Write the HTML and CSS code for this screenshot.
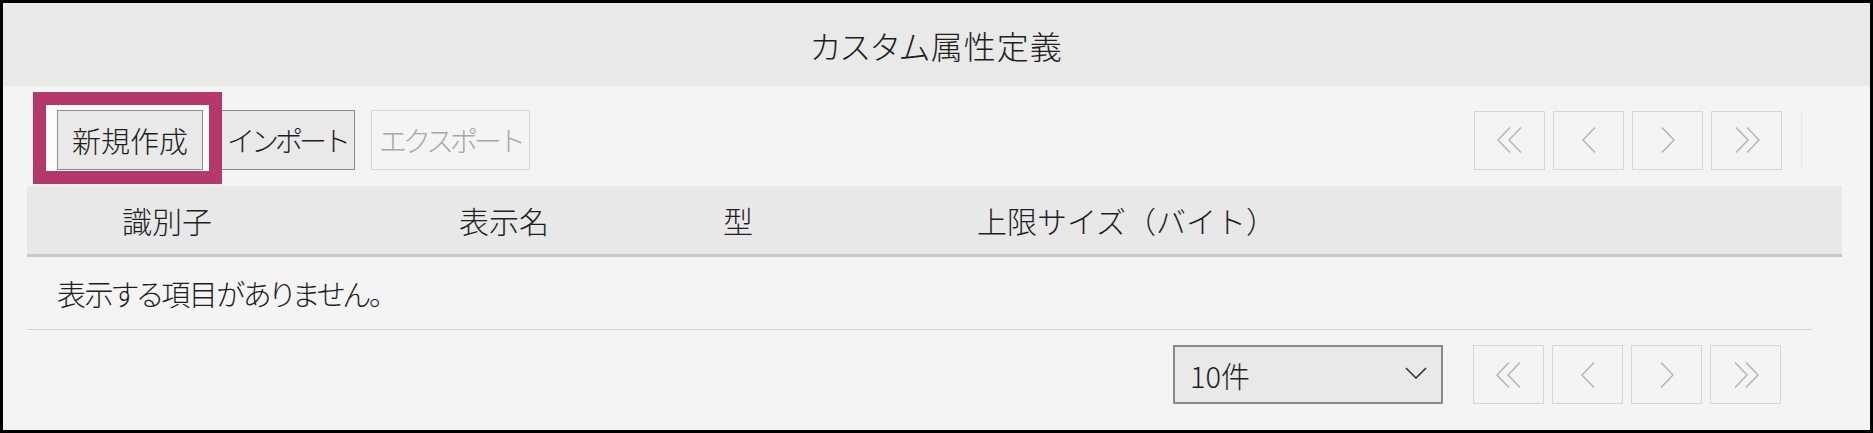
FILE: index.html
```html
<!DOCTYPE html>
<html lang="ja">
    <head>
        <meta charset="UTF-8">
        <meta name="viewport" content="width=device-width, initial-scale=1.0">
        <title>カスタム属性定義</title>
        <link rel="stylesheet" href="styles.css">
    </head>
    <body>
        <div class="frame">
            <!-- Título -->
            <header class="title-bar">カスタム属性定義</header>

            <main class="content">
                <!-- Barra de ferramentas -->
                <div class="toolbar">
                    <div class="actions">
                        <span class="highlight-wrap">
                            <button class="btn btn-new">新規作成</button>
                            <span class="highlight"></span>
                        </span>
                        <button class="btn btn-import">インポート</button>
                        <button class="btn btn-export" disabled>エクスポート</button>
                    </div>
                    <div class="pager">
                        <button class="page-btn" disabled>
                            <svg width="26" height="26" viewBox="0 0 26 26"><polyline points="13,0.5 1,13 13,25.5"/><polyline points="24,0.5 12,13 24,25.5"/></svg>
                        </button>
                        <button class="page-btn" disabled>
                            <svg width="14" height="26" viewBox="0 0 14 26"><polyline points="13,0.5 1,13 13,25.5"/></svg>
                        </button>
                        <button class="page-btn" disabled>
                            <svg width="14" height="26" viewBox="0 0 14 26"><polyline points="1,0.5 13,13 1,25.5"/></svg>
                        </button>
                        <button class="page-btn" disabled>
                            <svg width="26" height="26" viewBox="0 0 26 26"><polyline points="2,0.5 14,13 2,25.5"/><polyline points="13,0.5 25,13 13,25.5"/></svg>
                        </button>
                    </div>
                    <span class="divider"></span>
                </div>

                <!-- Tabela -->
                <div class="table">
                    <div class="thead">
                        <div class="th">識別子</div>
                        <div class="th">表示名</div>
                        <div class="th">型</div>
                        <div class="th">上限サイズ（バイト）</div>
                    </div>
                    <div class="empty">表示する項目がありません。</div>
                </div>

                <!-- Rodapé -->
                <div class="footer">
                    <div class="select-wrap">
                        <select class="page-size">
                            <option>10件</option>
                            <option>20件</option>
                            <option>50件</option>
                        </select>
                        <svg class="select-arrow" width="22" height="12" viewBox="0 0 22 12"><polyline points="1,1 11,11 21,1"/></svg>
                    </div>
                    <div class="pager">
                        <button class="page-btn" disabled>
                            <svg width="26" height="26" viewBox="0 0 26 26"><polyline points="13,0.5 1,13 13,25.5"/><polyline points="24,0.5 12,13 24,25.5"/></svg>
                        </button>
                        <button class="page-btn" disabled>
                            <svg width="14" height="26" viewBox="0 0 14 26"><polyline points="13,0.5 1,13 13,25.5"/></svg>
                        </button>
                        <button class="page-btn" disabled>
                            <svg width="14" height="26" viewBox="0 0 14 26"><polyline points="1,0.5 13,13 1,25.5"/></svg>
                        </button>
                        <button class="page-btn" disabled>
                            <svg width="26" height="26" viewBox="0 0 26 26"><polyline points="2,0.5 14,13 2,25.5"/><polyline points="13,0.5 25,13 13,25.5"/></svg>
                        </button>
                    </div>
                </div>
            </main>
        </div>
    </body>
</html>
```

FILE: styles.css
```css
/* Base */
body {
    margin: 0;
    padding: 0;
    font-family: "Noto Sans CJK JP", "Noto Sans", sans-serif;
    font-weight: 300;
    font-feature-settings: "palt";
    color: #1e1e1e;
}

.frame {
    height: 100vh;
    box-sizing: border-box;
    border: 3px solid #000;
    background: #f4f4f4;
    overflow: hidden;
}

/* Título */
.title-bar {
    height: 83px;
    background: #e9e9e9;
    display: flex;
    align-items: center;
    justify-content: center;
    font-size: 32px;
    line-height: 1;
    letter-spacing: 1px;
}

.content {
    padding: 0 28px 0 24px;
}

/* Barra de ferramentas */
.toolbar {
    display: flex;
    align-items: center;
    padding: 24px 40px 0 30px;
}

.actions {
    display: flex;
    align-items: center;
    flex: 1;
}

.btn {
    height: 60px;
    padding: 0;
    font-family: inherit;
    font-weight: 300;
    font-size: 29px;
    line-height: 1;
    color: #1e1e1e;
    background: #e9e9e9;
    border: 1px solid #8a8a8a;
    border-radius: 0;
    white-space: nowrap;
}

.btn-import {
    width: 150px;
    margin-left: 2px;
    padding-left: 14px;
    font-size: 28px;
    letter-spacing: -4px;
}

.btn-export {
    width: 159px;
    margin-left: 16px;
    font-size: 28px;
    letter-spacing: -4px;
    color: #a8a8a8;
    background: #f4f4f4;
    border-color: #d6d6d6;
}

/* Destaque do botão */
.highlight-wrap {
    position: relative;
    display: inline-block;
    height: 60px;
}

.btn-new {
    position: relative;
    z-index: 2;
    width: 146px;
}

.highlight {
    position: absolute;
    left: -24px;
    top: -18px;
    width: 163px;
    height: 66px;
    border: 13px solid #b5386a;
    background: #fbfbfb;
    z-index: 1;
}

/* Paginação */
.pager {
    display: flex;
    gap: 8px;
}

.page-btn {
    width: 71px;
    height: 59px;
    display: flex;
    align-items: center;
    justify-content: center;
    padding: 0;
    background: #f4f4f4;
    border: 1px solid #d6d6d6;
}

.page-btn svg {
    fill: none;
    stroke: #b3b3b3;
    stroke-width: 1.4;
}

.divider {
    width: 1px;
    height: 60px;
    margin-left: 19px;
    background: #e6e6e6;
}

/* Tabela */
.table {
    margin-top: 16px;
}

.thead {
    display: grid;
    grid-template-columns: 337px 264px 254px 1fr;
    height: 68px;
    align-items: center;
    background: #e8e8e8;
    border-bottom: 3px solid #c9c9c9;
}

.th {
    padding-left: 95px;
    font-size: 30px;
    line-height: 1;
    white-space: nowrap;
    font-feature-settings: normal;
}

.empty {
    height: 72px;
    margin-right: 30px;
    padding-left: 30px;
    display: flex;
    align-items: center;
    font-size: 29px;
    line-height: 1;
    letter-spacing: -1.5px;
    border-bottom: 1px solid #d2d2d2;
}

/* Rodapé */
.footer {
    display: flex;
    justify-content: flex-end;
    align-items: center;
    gap: 30px;
    margin-top: 15px;
    padding-right: 61px;
}

.select-wrap {
    position: relative;
}

.page-size {
    appearance: none;
    width: 270px;
    height: 59px;
    padding: 0 0 0 15px;
    font-family: inherit;
    font-weight: 300;
    font-size: 29px;
    color: #1e1e1e;
    background: #e9e9e9;
    border: 2px solid #8a8a8a;
    border-radius: 0;
}

.select-arrow {
    position: absolute;
    right: 16px;
    top: 22px;
    fill: none;
    stroke: #333;
    stroke-width: 1.6;
    pointer-events: none;
}
```
